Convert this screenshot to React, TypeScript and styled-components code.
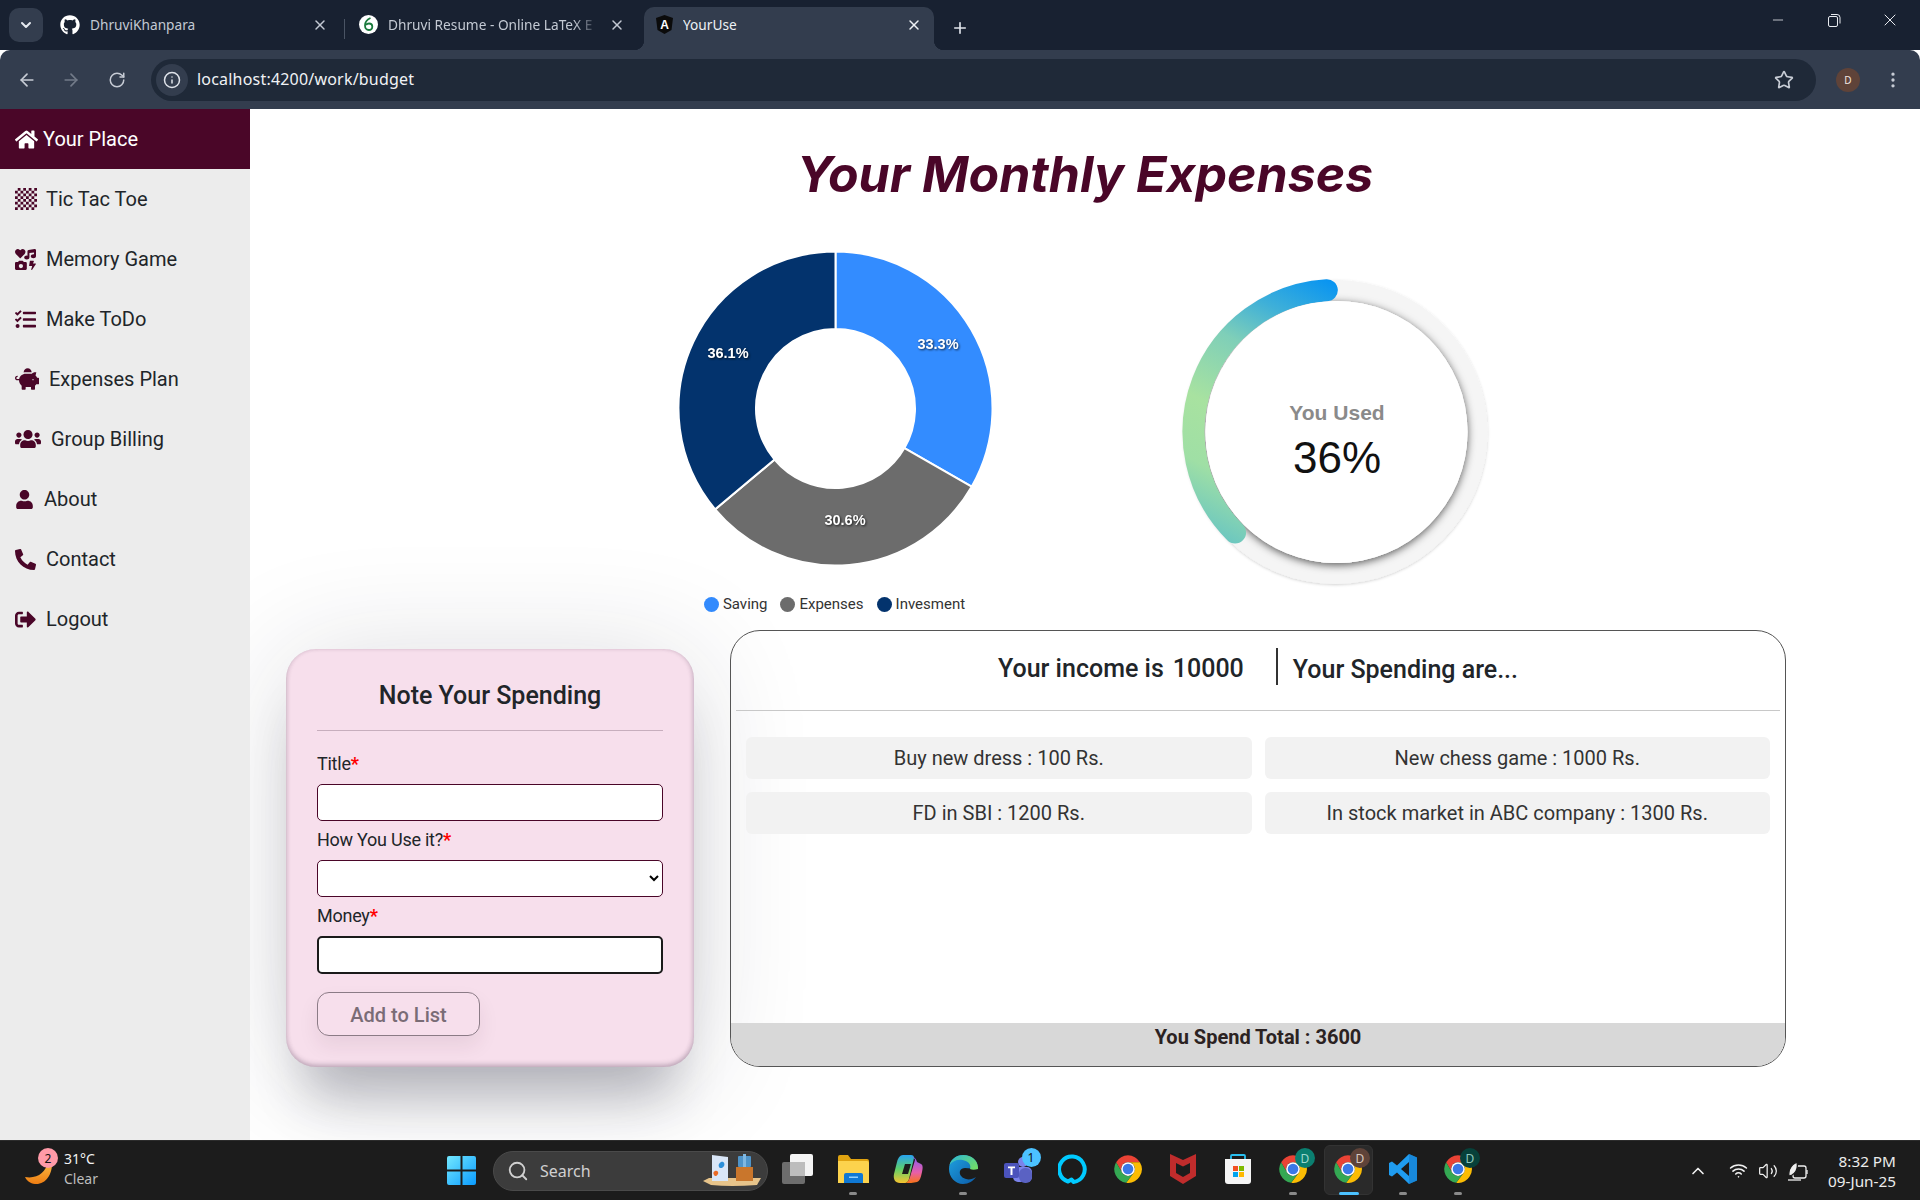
import React from "react";
import styled, { createGlobalStyle } from "styled-components";
import { ArrowLeft, ArrowRight, RotateCw, Info, Star, EllipsisVertical, Plus, X, Minus, ChevronDown, ChevronUp, Wifi, Volume2, Search } from "lucide-react";
import { FaGithub, FaHome, FaChessBoard, FaIcons, FaTasks, FaPiggyBank, FaUsers, FaUser, FaPhoneAlt, FaSignOutAlt } from "react-icons/fa";

const Global = createGlobalStyle`
  html, body { margin: 0; padding: 0; overflow: hidden; background: #fff; }
  * { box-sizing: border-box; }
`;

const MAROON = "#4a0628";
const UI_FONT = `"Noto Sans", "Open Sans", sans-serif`;

const Page = styled.div`
  display: flex; flex-direction: column; width: 1920px; height: 1200px;
  overflow: hidden; font-family: Roboto, sans-serif; color: #212529;
`;

/* browser chrome */
const TabStrip = styled.div`
  display: flex; align-items: flex-end; height: 50px; background: #182131; flex: none; position: relative;
`;
const TabMenu = styled.div`
  width: 34px; height: 34px; margin: 0 7px 8px 9px; border-radius: 10px; background: #333d4e;
  display: flex; align-items: center; justify-content: center; color: #e6eaf0;
`;
const Tab = styled.div<{ $active?: boolean }>`
  width: 290px; height: 43px; margin-right: 7px; padding: 0 12px 8px; display: flex; align-items: center; gap: 10px;
  border-radius: 10px 10px 0 0; background: ${(p) => (p.$active ? "#333d4e" : "transparent")};
  color: ${(p) => (p.$active ? "#eef1f5" : "#c3c9d3")}; font: 13.7px ${UI_FONT}; position: relative;
  ${(p) =>
    p.$active &&
    `&::before, &::after { content: ""; position: absolute; bottom: 0; width: 10px; height: 10px; }
     &::before { left: -10px; background: radial-gradient(circle at 0 0, transparent 10px, #333d4e 10.5px); }
     &::after { right: -10px; background: radial-gradient(circle at 100% 0, transparent 10px, #333d4e 10.5px); }`}
`;
const TabSep = styled.div`
  position: absolute; right: -5px; top: 12px; width: 1px; height: 20px; background: #4a5464;
`;
const TabTitle = styled.span<{ $fade?: boolean }>`
  flex: 1; white-space: nowrap; overflow: hidden;
  ${(p) => p.$fade && "-webkit-mask-image: linear-gradient(90deg,#000 88%,transparent 100%); mask-image: linear-gradient(90deg,#000 88%,transparent 100%);"}
`;
const NewTab = styled.div`
  width: 28px; height: 28px; margin: 0 0 8px 5px; display: flex; align-items: center; justify-content: center; color: #dfe3ea;
`;
const WinControls = styled.div`
  margin-left: auto; align-self: flex-start; height: 40px; display: flex; align-items: center; color: #e8ebf0; padding-right: 2px;
`;
const WinBtn = styled.div`
  width: 56px; display: flex; justify-content: center;
`;
const Toolbar = styled.div`
  height: 59px; flex: none; background: #333d4e; border-radius: 10px 10px 0 0; display: flex; align-items: center; color: #c7ccd5;
`;
const NavBtn = styled.div<{ $dim?: boolean; $w?: number }>`
  width: ${(p) => p.$w ?? 45}px; display: flex; justify-content: center; color: ${(p) => (p.$dim ? "#737b89" : "#c7ccd5")}; flex: none;
`;
const BackBtn = styled(NavBtn)`
  padding-left: 4px;
`;
const MenuBtn = styled(NavBtn)`
  margin-left: 10px;
`;
const Omni = styled.div`
  width: 1665px; height: 42px; margin: 0 9px; border-radius: 21px; background: #1f2938; display: flex; align-items: center; padding: 0 22px 0 5px; flex: none;
`;
const InfoChip = styled.div`
  width: 32px; height: 32px; border-radius: 50%; background: #333d4e; display: flex; align-items: center; justify-content: center; color: #dfe3ea; flex: none;
`;
const Url = styled.span`
  margin: -1px 0 0 9px; flex: 1; font: 16px ${UI_FONT}; color: #f0f2f5; letter-spacing: 0.2px;
`;
const Avatar = styled.div`
  width: 24px; height: 24px; margin: 0 0 0 11px; border-radius: 50%; background: #5f4339; color: #f2e6e0; font: 10px ${UI_FONT};
  display: flex; align-items: center; justify-content: center; flex: none;
`;

/* body */
const Body = styled.div`
  flex: 1; display: flex; min-height: 0; overflow: hidden;
`;
const Sidebar = styled.nav`
  width: 250px; flex: none; background: #ececec; position: relative; z-index: 2;
`;
const NavItem = styled.div<{ $active?: boolean }>`
  height: 60px; display: flex; align-items: center; padding-left: 15px; font-size: 20px;
  background: ${(p) => (p.$active ? MAROON : "transparent")}; color: ${(p) => (p.$active ? "#fff" : "#212529")};
`;
const NavIcon = styled.span<{ $w: number; $active?: boolean }>`
  width: ${(p) => p.$w}px; flex: none; display: flex; color: ${(p) => (p.$active ? "#fff" : MAROON)};
`;
const Content = styled.main`
  flex: 1; min-width: 0; background: #fff;
`;
const Title = styled.h1`
  margin: 35px 0 0; height: 60px; text-align: center; font: italic 700 50px/60px Inter, Roboto, sans-serif; color: ${MAROON};
`;
const Charts = styled.div`
  display: flex; justify-content: center; gap: 181px; margin-top: 44px; height: 382px;
`;
const DonutBlock = styled.div`
  width: 320px; display: flex; flex-direction: column; align-items: center;
`;
const Legend = styled.div`
  display: flex; gap: 13px; margin-top: 26px; font: 15px/20px Roboto, sans-serif; color: #333; white-space: nowrap;
`;
const LegendEntry = styled.span`
  display: flex; align-items: center; gap: 4px;
`;
const LegendDot = styled.i<{ $c: string }>`
  width: 15px; height: 15px; border-radius: 50%; background: ${(p) => p.$c};
`;
const GaugeBox = styled.div`
  width: 320px; height: 320px; margin-top: 24px;
`;
const Bottom = styled.div`
  display: flex; align-items: flex-start; gap: 36px; padding-left: 36px;
`;
const FormCard = styled.form`
  width: 408px; height: 418px; margin-top: 19px; padding: 0 31px; border-radius: 30px; background: #f7dfec; flex: none;
  box-shadow: inset 0 -3px 5px rgba(60,40,70,.22), inset 2px 0 4px rgba(60,40,70,.06), inset -2px 0 4px rgba(60,40,70,.1),
    0 50px 50px -20px rgba(30,30,50,.27), 0 10px 120px rgba(30,30,50,.16);
`;
const FormTitle = styled.h3`
  margin: 0; height: 82px; text-align: center; font: 500 25px/94px Roboto, sans-serif; border-bottom: 1px solid #c7aebd; color: #212529;
`;
const Label = styled.label<{ $first?: boolean }>`
  display: block; margin-top: ${(p) => (p.$first ? 21 : 7)}px; height: 24px; font: 18px/24px Roboto, sans-serif; color: #212529; letter-spacing: -0.25px;
`;
const Req = styled.span`
  color: #ff0000; font-weight: 700;
`;
const Field = styled.input<{ $focus?: boolean }>`
  display: block; width: 100%; height: ${(p) => (p.$focus ? 38 : 37)}px; margin-top: 8px; background: #fff; border-radius: 5px; outline: none; padding: 0 8px;
  border: ${(p) => (p.$focus ? "2px solid #1a1a1a" : `1px solid ${MAROON}`)};
`;
const Dropdown = styled.select`
  display: block; width: 100%; height: 37px; margin-top: 8px; background: #fff; border-radius: 5px; outline: none; border: 1px solid ${MAROON};
`;
const AddBtn = styled.button`
  display: block; width: 163px; height: 44px; margin-top: 18px; background: transparent; border: 1px solid #8b7b86; border-radius: 12px;
  font: 500 20px/40px Roboto, sans-serif; color: #7a6c76; box-shadow: 0 10px 20px rgba(60,30,50,.08); padding: 1px 0 0;
`;
const Panel = styled.section`
  width: 1056px; height: 437px; border: 1px solid #555; border-radius: 30px; overflow: hidden; display: flex; flex-direction: column; flex: none;
`;
const PanelHead = styled.div`
  height: 80px; margin: 0 5px; border-bottom: 1px solid #c8c8c8; display: flex; align-items: center; justify-content: center;
  font: 500 25px Roboto, sans-serif; color: #212529; flex: none; padding-bottom: 8px;
`;
const HeadLeft = styled.span`
  display: flex; gap: 9px; padding-right: 32px; border-right: 2px solid #333; height: 37px; line-height: 42px;
`;
const HeadRight = styled.span`
  padding: 5px 0 0 15px; line-height: 37px;
`;
const Grid = styled.div`
  display: grid; grid-template-columns: 1fr 1fr; gap: 13px; padding: 26px 15px 0; flex: 1; align-content: start;
`;
const Spend = styled.div`
  height: 42px; background: #f2f2f2; border-radius: 6px; display: flex; align-items: center; justify-content: center; font-size: 20px; color: #333;
`;
const TotalBar = styled.div`
  height: 43px; background: #d8d8d8; text-align: center; font: 700 20px/29px Roboto, sans-serif; color: #2b2222; flex: none;
`;

/* taskbar */
const Taskbar = styled.footer`
  height: 60px; flex: none; background: #1c1c1c; border-top: 1px solid #2c2c2c; display: flex; align-items: center; position: relative; z-index: 3;
`;
const Weather = styled.div`
  width: 447px; flex: none; padding-left: 25px; display: flex; align-items: center; position: relative; height: 100%;
`;
const Badge = styled.span<{ $bg: string; $x: number; $y: number; $s: number; $c?: string }>`
  position: absolute; left: ${(p) => p.$x}px; top: ${(p) => p.$y}px; width: ${(p) => p.$s}px; height: ${(p) => p.$s}px; border-radius: 50%;
  background: ${(p) => p.$bg}; color: ${(p) => p.$c ?? "#111"}; font: 12px ${UI_FONT}; display: flex; align-items: center; justify-content: center;
`;
const WeatherText = styled.div`
  margin: -3px 0 0 11px; font: 14px/20px ${UI_FONT}; color: #f2f2f2;
`;
const WeatherSub = styled.div`
  color: #bdbdbd;
`;
const SearchPill = styled.div`
  width: 275px; height: 40px; margin-left: 17px; border-radius: 20px; background: #3c3c3c; border: 1px solid #4a4a4a; display: flex; align-items: center;
  padding-left: 13px; gap: 11px; color: #d0d0d0; font: 16px ${UI_FONT}; flex: none; position: relative; margin-right: 2.5px;
`;
const SearchArt = styled.span`
  position: absolute; right: 4px; bottom: 2px; display: flex;
`;
const Slot = styled.div<{ $active?: boolean; $dot?: boolean }>`
  width: 55px; height: 100%; flex: none; display: flex; align-items: center; justify-content: center; position: relative; padding-bottom: 3px;
  ${(p) => p.$active && `&::before { content: ""; position: absolute; left: 3px; right: 3px; top: 4px; bottom: 5px; background: #2a2a2a; border: 1px solid #333; border-radius: 6px; }`}
  ${(p) => p.$active && `&::after { content: ""; position: absolute; left: 18px; width: 20px; bottom: 5px; height: 3px; border-radius: 2px; background: #4cc2ff; }`}
  ${(p) => p.$dot && `&::after { content: ""; position: absolute; left: calc(50% - 4px); width: 8px; bottom: 5px; height: 3px; border-radius: 2px; background: #8a8a8a; }`}
  & > svg { position: relative; }
`;
const ChromeWrap = styled.span`
  position: relative; display: flex;
`;
const Tray = styled.div`
  margin-left: auto; display: flex; align-items: center; padding-right: 24px; color: #f0f0f0;
`;
const TrayCell = styled.div<{ $mr?: number }>`
  width: 30px; display: flex; justify-content: center; margin-right: ${(p) => p.$mr ?? 0}px;
`;
const Clock = styled.div`
  margin-left: 15px; text-align: right; font: 15.3px/20px ${UI_FONT}; color: #ececec;
`;

/* drawings */
const ChromeLogo = ({ s = 30 }: { s?: number }) => (
  <svg width={s} height={s} viewBox="0 0 48 48" style={{ position: "relative" }}>
    <path fill="#ea4335" d="M5 13A22 22 0 0 1 43 13L24 13A11 11 0 0 0 14.5 29.5Z" />
    <path fill="#fbbc04" d="M43 13A22 22 0 0 1 21 46L33.5 29.5A11 11 0 0 0 24 13Z" />
    <path fill="#34a853" d="M21 46A22 22 0 0 1 5 13L14.5 29.5A11 11 0 0 0 33.5 29.5Z" />
    <circle cx="24" cy="24" r="11" fill="#fff" />
    <circle cx="24" cy="24" r="8.5" fill="#3b78e7" />
  </svg>
);
const WinLogo = () => (
  <svg width="29" height="29" viewBox="0 0 29 29" style={{ flex: "none" }}>
    <defs>
      <linearGradient id="wl" x1="0" y1="0" x2="1" y2="1"><stop offset="0" stopColor="#73e8ff" /><stop offset="1" stopColor="#0a9bff" /></linearGradient>
    </defs>
    <path fill="url(#wl)" d="M0 2a2 2 0 0 1 2-2h11.5v13.5H0ZM15.500 0H27a2 2 0 0 1 2 2v11.500H15.500ZM0 15.500h13.500V29H2a2 2 0 0 1-2-2ZM15.500 15.500H29V27a2 2 0 0 1-2 2H15.500Z" />
  </svg>
);
const ShelfArt = () => (
  <svg width="62" height="34" viewBox="0 0 62 34">
    <path d="M2 27 L8 24 H60 L56 31 Q30 33 10 31Z" fill="#e7c48b" />
    <path d="M11 1 L27 3 V27 L11 27Z" fill="#d9e6f7" />
    <path d="M20 8c3-1 4 2 3 4s-4 3-5 1 0-4 2-5Z" fill="#2b8fd9" />
    <path d="M14 17c2-1 4 1 3 3s-3 3-4 1-1-3 1-4Z" fill="#ea6a25" />
    <rect x="35" y="13" width="17" height="14" fill="#c9762c" />
    <rect x="37" y="2" width="13" height="11" rx="1" fill="#4f94c9" />
    <rect x="42" y="0" width="3" height="13" fill="#7fb8e2" />
  </svg>
);
const TaskView = () => (
  <svg width="32" height="30" viewBox="0 0 32 30">
    <rect x="0" y="8" width="23" height="22" rx="2" fill="#6d6d6d" />
    <rect x="8" y="0" width="23" height="22" rx="2" fill="#f4f4f4" />
    <rect x="8" y="8" width="15" height="14" fill="#bdbdbd" />
  </svg>
);
const Explorer = () => (
  <svg width="31" height="28" viewBox="0 0 31 28">
    <path d="M0 2a2 2 0 0 1 2-2h8l3 4h16a2 2 0 0 1 2 2v4H0Z" fill="#e0a310" />
    <path d="M0 6h29a2 2 0 0 1 2 2v20H0Z" fill="#fcd34d" />
    <path d="M6 20a2 2 0 0 1 2-2h15a2 2 0 0 1 2 2v8H6Z" fill="#0f78d4" />
    <rect x="11" y="21.500" width="9" height="1.500" fill="#8fd0ff" />
  </svg>
);
const Copilot = () => (
  <svg width="30" height="30" viewBox="0 0 30 30">
    <defs>
      <linearGradient id="cp1" x1="0" y1="0" x2="0" y2="1"><stop offset="0" stopColor="#27a3f0" /><stop offset=".5" stopColor="#5fd06a" /><stop offset="1" stopColor="#f6c32f" /></linearGradient>
      <linearGradient id="cp2" x1="0" y1="0" x2="0" y2="1"><stop offset="0" stopColor="#8a5cf0" /><stop offset=".6" stopColor="#e85fa8" /><stop offset="1" stopColor="#f97316" /></linearGradient>
    </defs>
    <path d="M10 1h8c2 0 3 1 3 3l-5 21c-.500 2-2 4-4 4H7C2 29 0 25 1 20L4 8c1-4 3-7 6-7Z" fill="url(#cp1)" />
    <path d="M19 3c3 0 4 2 5 5l4 2c2 1 2 4 1 8-1 5-2 9-5 10-3 1-9 1-11 1 2-1 3-3 4-6l5-17c0-1-1-2-3-3Z" fill="url(#cp2)" />
    <path d="M12 10h6l-3 10h-6Z" fill="#1c1c1c" />
  </svg>
);
const EdgeLogo = () => (
  <svg width="29" height="29" viewBox="0 0 29 29">
    <defs>
      <linearGradient id="ed1" x1="0" y1="0" x2="1" y2="1"><stop offset="0" stopColor="#1fa2e0" /><stop offset="1" stopColor="#0b5aa8" /></linearGradient>
      <linearGradient id="ed2" x1="0" y1="0" x2="1" y2=".7"><stop offset="0" stopColor="#2bb6d8" /><stop offset="1" stopColor="#6fdc6a" /></linearGradient>
    </defs>
    <path d="M14.500 0C6 0 0 6 0 14c0 8 6 15 14 15 6 0 10-3 13-7-3 2-7 3-10 2-4-1-7-4-6-8 .5-2 3-3 5-3 4 0 8 1 13 1 .5-8-6-14-15-14Z" fill="url(#ed1)" />
    <path d="M14.500 0C7 0 1.500 5 .500 10c3-4 8-6 13-5 6 1 9 5 7.500 9 2 1 5 1 8 0 .5-8-6-14-14.500-14Z" fill="url(#ed2)" />
  </svg>
);
const Teams = () => (
  <svg width="29" height="27" viewBox="0 0 29 27">
    <circle cx="19" cy="6" r="5" fill="#7b83eb" />
    <rect x="9" y="11" width="19" height="15" rx="5" fill="#7b83eb" />
    <rect x="15" y="12" width="13" height="15" rx="6" fill="#5a62c3" />
    <rect x="0" y="7" width="15" height="15" rx="2" fill="#4b53bc" />
    <path d="M4 10.500h7v1.800H8.500V19H6.500v-6.700H4Z" fill="#fff" />
  </svg>
);
const Alexa = () => (
  <svg width="30" height="31" viewBox="0 0 30 31">
    <path d="M10 27.500A12.800 12.800 0 1 1 15.500 28L13.500 25.500Z" fill="none" stroke="#00caff" strokeWidth="4" strokeLinejoin="round" />
  </svg>
);
const McAfee = () => (
  <svg width="26" height="30" viewBox="0 0 26 30">
    <path d="M0 0 L13 6 L26 0 V22 L13 30 L0 22Z M6 9 V19 L13 23 L20 19 V9 L13 12.500Z" fill="#c02c2c" fillRule="evenodd" />
  </svg>
);
const Store = () => (
  <svg width="28" height="31" viewBox="0 0 28 31">
    <path d="M7 6 V2 a1 1 0 0 1 1-1 H20 a1 1 0 0 1 1 1 V6" fill="none" stroke="#2ac0f0" strokeWidth="1.800" />
    <path d="M1 5 H27 V27 a3 3 0 0 1-3 3 H4 a3 3 0 0 1-3-3Z" fill="#f5f5f5" />
    <rect x="9" y="12" width="5" height="5" fill="#f25022" /><rect x="15" y="12" width="5" height="5" fill="#7fba00" />
    <rect x="9" y="18" width="5" height="5" fill="#00a4ef" /><rect x="15" y="18" width="5" height="5" fill="#ffb900" />
  </svg>
);
const VSCode = () => (
  <svg width="28" height="30" viewBox="0 0 28 30">
    <path d="M20 0 L28 3.500 V26.500 L20 30 L8 18.500 L3 22.500 L0 21 V9 L3 7.500 L8 11.500Z M20 8 L12 15 L20 22Z" fill="#1f9cf0" fillRule="evenodd" />
    <path d="M20 0 L28 3.500 V26.500 L20 30Z" fill="#1278c8" opacity=".55" />
  </svg>
);
const Moon = () => (
  <svg width="28" height="28" viewBox="0 0 28 28" style={{ flex: "none" }}>
    <defs>
      <linearGradient id="mn" x1="0" y1="0" x2="0" y2="1"><stop offset="0" stopColor="#fbbf47" /><stop offset="1" stopColor="#ee7d12" /></linearGradient>
    </defs>
    <path d="M27 4 C28 18 20 28 10 27 C5 26.500 2 24 0 20 C12 22 21 16 23 4Z" fill="url(#mn)" />
  </svg>
);
const Battery = () => (
  <svg width="22" height="20" viewBox="0 0 22 20" fill="none" stroke="#f0f0f0" strokeWidth="1.300">
    <rect x="6" y="5" width="13" height="12" rx="2" />
    <path d="M20 9v4" />
    <path d="M2 15C1 9 4 4 10 1c1 5 0 10-5 13Z" fill="#f0f0f0" stroke="#1c1c1c" />
    <path d="M1 19h13" />
  </svg>
);
const Overleaf = () => (
  <svg width="19" height="19" viewBox="0 0 19 19" style={{ flex: "none" }}>
    <circle cx="9.500" cy="9.500" r="9.500" fill="#fff" />
    <path d="M11.500 3C8 4.500 6 7 6 10.500c0 2.500 1.500 4.500 3.800 4.500s3.500-1.700 3.500-3.500S12 8.500 10 8.500 7 10 7 10" fill="none" stroke="#1a7a3c" strokeWidth="1.800" />
  </svg>
);
const AngularTxt = styled.text`
  font: 700 12px "Liberation Sans", sans-serif; fill: #fff;
`;
const AngularLogo = () => (
  <svg width="17" height="19" viewBox="0 0 17 19" style={{ flex: "none" }}>
    <polygon points="8.500,0 17,3 15.500,15 8.500,19 1.500,15 0,3" fill="#0b0b0b" />
    <AngularTxt x="8.500" y="14" textAnchor="middle">A</AngularTxt>
  </svg>
);

const polar = (cx: number, cy: number, r: number, deg: number) => {
  const a = ((deg - 90) * Math.PI) / 180;
  return [cx + r * Math.cos(a), cy + r * Math.sin(a)];
};
const slicePath = (c: number, R: number, r: number, a0: number, a1: number) => {
  const [x0, y0] = polar(c, c, R, a0);
  const [x1, y1] = polar(c, c, R, a1);
  const [x2, y2] = polar(c, c, r, a1);
  const [x3, y3] = polar(c, c, r, a0);
  const large = a1 - a0 > 180 ? 1 : 0;
  return `M${x0} ${y0}A${R} ${R} 0 ${large} 1 ${x1} ${y1}L${x2} ${y2}A${r} ${r} 0 ${large} 0 ${x3} ${y3}Z`;
};

const slices = [
  { name: "Saving", color: "#338cff", pct: 33.3, lx: 263, ly: 101 },
  { name: "Expenses", color: "#6c6c6c", pct: 30.6, lx: 170, ly: 277 },
  { name: "Invesment", color: "#03336d", pct: 36.1, lx: 53, ly: 110 },
];

const DonutLabel = styled.text`
  font: 700 14.5px "Liberation Sans", Arial, sans-serif; fill: #fff; text-anchor: middle; filter: drop-shadow(1px 1px 1px rgba(0,0,0,.7));
`;

const Donut = () => {
  let a = 0;
  return (
    <svg width="320" height="320" viewBox="0 0 320 320" style={{ flex: "none" }}>
      {slices.map((s) => {
        const a0 = a;
        a += (s.pct / 100) * 360;
        return <path key={s.name} d={slicePath(160.5, 157, 79.5, a0, a)} fill={s.color} stroke="#fff" strokeWidth="2" />;
      })}
      {slices.map((s) => (
        <DonutLabel key={s.name} x={s.lx} y={s.ly}>{s.pct}%</DonutLabel>
      ))}
    </svg>
  );
};

const GaugeLabel = styled.text`
  font: 700 21px "Liberation Sans", Arial, sans-serif; fill: #8a8a8a; text-anchor: middle;
`;
const GaugeValue = styled.text`
  font: 44px "Liberation Sans", Arial, sans-serif; fill: #111; text-anchor: middle;
`;

const Gauge = () => {
  const [sx, sy] = polar(159.5, 160, 142, -3.5);
  const [ex, ey] = polar(159.5, 160, 142, -135);
  return (
    <svg width="320" height="320" viewBox="0 0 320 320">
      <defs>
        <linearGradient id="gg" gradientUnits="userSpaceOnUse" x1="170" y1="8" x2="40" y2="264">
          <stop offset="0" stopColor="#0090f5" />
          <stop offset=".2" stopColor="#3fb0d8" />
          <stop offset=".36" stopColor="#7fcfb8" />
          <stop offset=".6" stopColor="#a8e2a0" />
          <stop offset=".8" stopColor="#9fdfa5" />
          <stop offset="1" stopColor="#6cc7c0" />
        </linearGradient>
        <filter id="gs" x="-20%" y="-20%" width="140%" height="140%">
          <feDropShadow dx="0" dy="2" stdDeviation="4.500" floodColor="#000" floodOpacity=".65" />
        </filter>
        <filter id="gr" x="-20%" y="-20%" width="140%" height="140%">
          <feDropShadow dx="0" dy="1" stdDeviation="1.500" floodColor="#000" floodOpacity=".18" />
        </filter>
      </defs>
      <circle cx="159.500" cy="160" r="152" fill="#f5f5f5" filter="url(#gr)" />
      <circle cx="160.500" cy="160" r="131" fill="#fff" filter="url(#gs)" />
      <path d={`M${sx} ${sy}A142 142 0 0 0 ${ex} ${ey}`} fill="none" stroke="url(#gg)" strokeWidth="22" strokeLinecap="round" />
      <circle cx="160.500" cy="160" r="131" fill="#fff" />
      <GaugeLabel x="161" y="148">You Used</GaugeLabel>
      <GaugeValue x="161" y="201">36%</GaugeValue>
    </svg>
  );
};

const nav = [
  { label: "Your Place", icon: <FaHome size={23} />, w: 28, active: true },
  { label: "Tic Tac Toe", icon: <FaChessBoard size={22} />, w: 31 },
  { label: "Memory Game", icon: <FaIcons size={21} />, w: 31 },
  { label: "Make ToDo", icon: <FaTasks size={21} />, w: 31 },
  { label: "Expenses Plan", icon: <FaPiggyBank size={24} />, w: 34 },
  { label: "Group Billing", icon: <FaUsers size={26} />, w: 36 },
  { label: "About", icon: <FaUser size={19} />, w: 29 },
  { label: "Contact", icon: <FaPhoneAlt size={21} />, w: 31 },
  { label: "Logout", icon: <FaSignOutAlt size={21} />, w: 31 },
];

const spends = ["Buy new dress : 100 Rs.", "New chess game : 1000 Rs.", "FD in SBI : 1200 Rs.", "In stock market in ABC company : 1300 Rs."];

export default function App() {
  return (
    <Page>
      <Global />
      <TabStrip>
        <TabMenu><ChevronDown size={16} strokeWidth={3} /></TabMenu>
        <Tab>
          <FaGithub size={20} color="#fff" style={{ flex: "none", marginLeft: -2 }} />
          <TabTitle>DhruviKhanpara</TabTitle>
          <X size={16} strokeWidth={2.2} />
          <TabSep />
        </Tab>
        <Tab>
          <Overleaf />
          <TabTitle $fade>Dhruvi Resume - Online LaTeX E</TabTitle>
          <X size={16} strokeWidth={2.2} />
        </Tab>
        <Tab $active>
          <AngularLogo />
          <TabTitle>YourUse</TabTitle>
          <X size={16} strokeWidth={2.2} />
        </Tab>
        <NewTab><Plus size={18} strokeWidth={2.2} /></NewTab>
        <WinControls>
          <WinBtn><Minus size={16} strokeWidth={1.2} /></WinBtn>
          <WinBtn><svg width="14" height="14" viewBox="0 0 14 14" fill="none" stroke="#e8ebf0"><rect x="1.500" y="3.500" width="9" height="10" rx="1.500" /><path d="M4 1.500h6a3 3 0 0 1 3 3v6" /></svg></WinBtn>
          <WinBtn><X size={20} strokeWidth={1.2} /></WinBtn>
        </WinControls>
      </TabStrip>
      <Toolbar>
        <BackBtn $w={50}><ArrowLeft size={20} /></BackBtn>
        <NavBtn $dim $w={42}><ArrowRight size={20} /></NavBtn>
        <NavBtn $w={50}><RotateCw size={18} /></NavBtn>
        <Omni>
          <InfoChip><Info size={18} /></InfoChip>
          <Url>localhost:4200/work/budget</Url>
          <Star size={20} />
        </Omni>
        <Avatar>D</Avatar>
        <MenuBtn $w={45}><EllipsisVertical size={20} /></MenuBtn>
      </Toolbar>
      <Body>
        <Sidebar>
          {nav.map((n) => (
            <NavItem key={n.label} $active={n.active}>
              <NavIcon $w={n.w} $active={n.active}>{n.icon}</NavIcon>
              {n.label}
            </NavItem>
          ))}
        </Sidebar>
        <Content>
          <Title>Your Monthly Expenses</Title>
          <Charts>
            <DonutBlock>
              <Donut />
              <Legend>
                {slices.map((s) => (
                  <LegendEntry key={s.name}><LegendDot $c={s.color} />{s.name}</LegendEntry>
                ))}
              </Legend>
            </DonutBlock>
            <GaugeBox><Gauge /></GaugeBox>
          </Charts>
          <Bottom>
            <FormCard>
              <FormTitle>Note Your Spending</FormTitle>
              <Label $first>Title<Req>*</Req></Label>
              <Field />
              <Label>How You Use it?<Req>*</Req></Label>
              <Dropdown><option></option></Dropdown>
              <Label>Money<Req>*</Req></Label>
              <Field $focus />
              <AddBtn type="button">Add to List</AddBtn>
            </FormCard>
            <Panel>
              <PanelHead>
                <HeadLeft><span>Your income is</span><span>10000</span></HeadLeft>
                <HeadRight>Your Spending are...</HeadRight>
              </PanelHead>
              <Grid>
                {spends.map((s) => <Spend key={s}>{s}</Spend>)}
              </Grid>
              <TotalBar>You Spend Total : 3600</TotalBar>
            </Panel>
          </Bottom>
        </Content>
      </Body>
      <Taskbar>
        <Weather>
          <Moon />
          <Badge $bg="#ff9aa8" $x={38} $y={7} $s={20}>2</Badge>
          <WeatherText>31°C<WeatherSub>Clear</WeatherSub></WeatherText>
        </Weather>
        <WinLogo />
        <SearchPill>
          <Search size={22} />
          Search
          <SearchArt><ShelfArt /></SearchArt>
        </SearchPill>
        <Slot><TaskView /></Slot>
        <Slot $dot><Explorer /></Slot>
        <Slot><Copilot /></Slot>
        <Slot $dot><EdgeLogo /></Slot>
        <Slot><ChromeWrap><Teams /><Badge $bg="#4cc2ff" $x={18} $y={-8} $s={19}>1</Badge></ChromeWrap></Slot>
        <Slot><Alexa /></Slot>
        <Slot><ChromeLogo /></Slot>
        <Slot><McAfee /></Slot>
        <Slot><Store /></Slot>
        <Slot $dot><ChromeWrap><ChromeLogo /><Badge $bg="#0b7f70" $c="#9fd8cf" $x={17} $y={-6} $s={20}>D</Badge></ChromeWrap></Slot>
        <Slot $active><ChromeWrap><ChromeLogo /><Badge $bg="#5f4339" $c="#d8c8c0" $x={17} $y={-6} $s={20}>D</Badge></ChromeWrap></Slot>
        <Slot $dot><VSCode /></Slot>
        <Slot $dot><ChromeWrap><ChromeLogo /><Badge $bg="#07413a" $c="#8fc8bf" $x={17} $y={-6} $s={20}>D</Badge></ChromeWrap></Slot>
        <Tray>
          <TrayCell $mr={10}><ChevronUp size={20} /></TrayCell>
          <TrayCell><Wifi size={19} /></TrayCell>
          <TrayCell><Volume2 size={20} strokeWidth={1.5} /></TrayCell>
          <TrayCell><Battery /></TrayCell>
          <Clock>8:32 PM<br />09-Jun-25</Clock>
        </Tray>
      </Taskbar>
    </Page>
  );
}
